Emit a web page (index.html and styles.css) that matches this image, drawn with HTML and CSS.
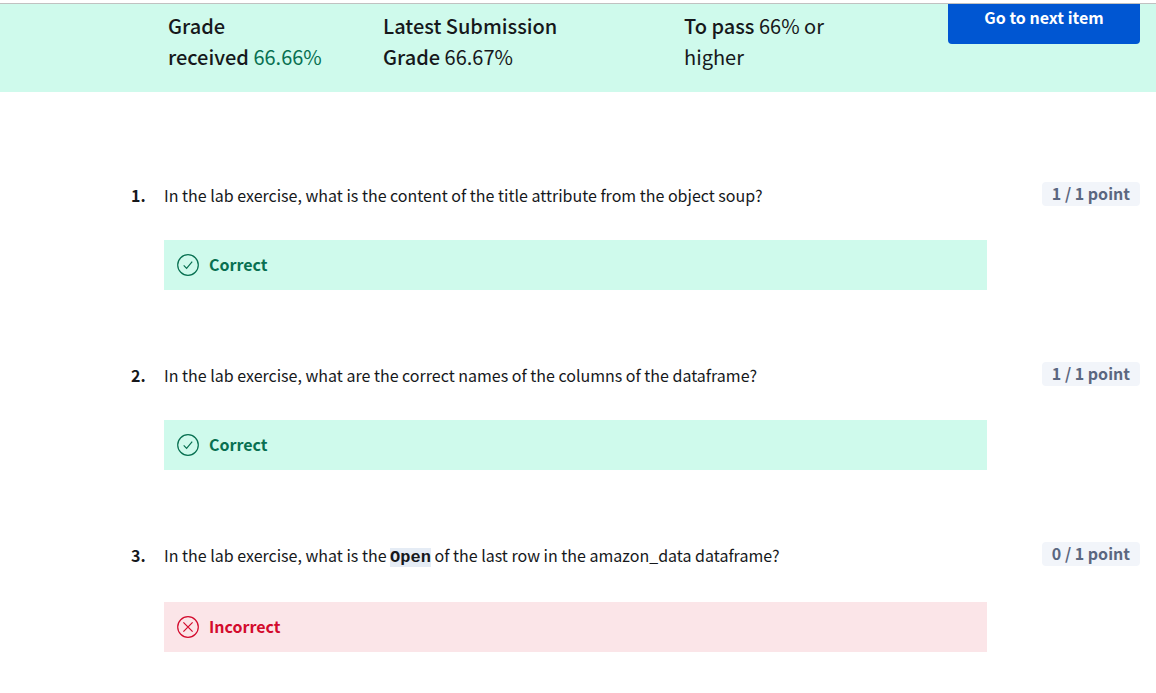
FILE: index.html
```html
<!DOCTYPE html>
<html lang="en">
<head>
<meta charset="utf-8">
<meta name="viewport" content="width=device-width, initial-scale=1">
<title>Quiz results</title>
<link rel="stylesheet" href="styles.css">
</head>
<body>
<header class="summary">
  <div class="stat stat-received"><strong>Grade received</strong>&nbsp;<span class="passed">66.66%</span></div>
  <div class="stat stat-latest"><strong>Latest Submission Grade</strong> <span>66.67%</span></div>
  <div class="stat stat-pass"><strong>To pass</strong> <span>66% or higher</span></div>
  <button class="next" type="button">Go to next item</button>
</header>
<main class="questions">
  <section class="question">
    <span class="number">1.</span>
    <p class="prompt">In the lab exercise, what is the content of the title attribute from the object soup?</p>
    <span class="points">1 / 1 point</span>
    <div class="feedback correct">
      <svg class="icon" viewBox="0 0 22 22" aria-hidden="true"><circle cx="11" cy="11" r="10.3"/><path d="M6.7 11.3l2.9 3 5.6-6.6"/></svg>
      <span class="verdict">Correct</span>
    </div>
  </section>
  <section class="question">
    <span class="number">2.</span>
    <p class="prompt">In the lab exercise, what are the correct names of the columns of the dataframe?</p>
    <span class="points">1 / 1 point</span>
    <div class="feedback correct">
      <svg class="icon" viewBox="0 0 22 22" aria-hidden="true"><circle cx="11" cy="11" r="10.3"/><path d="M6.7 11.3l2.9 3 5.6-6.6"/></svg>
      <span class="verdict">Correct</span>
    </div>
  </section>
  <section class="question">
    <span class="number">3.</span>
    <p class="prompt">In the lab exercise, what is the <code>Open</code> of the last row in the amazon_data dataframe?</p>
    <span class="points">0 / 1 point</span>
    <div class="feedback incorrect">
      <svg class="icon" viewBox="0 0 22 22" aria-hidden="true"><circle cx="11" cy="11" r="10.3"/><path d="M6.4 6.4l9.2 9.2M15.6 6.4l-9.2 9.2"/></svg>
      <span class="verdict">Incorrect</span>
    </div>
  </section>
</main>
</body>
</html>
```
FILE: styles.css
```css
* {
  box-sizing: border-box;
}

body {
  margin: 0;
  padding-top: 3px;
  color: #16181b;
  background: #fff;
  font-family: "Noto Sans CJK SC", "Noto Sans", sans-serif;
  font-size: 16px;
  line-height: 24px;
}

.summary {
  display: grid;
  grid-template-columns: 215px 301px 1fr 192px;
  align-items: start;
  padding: 0 16px 20px 168px;
  border-top: 1px solid #c1c1c1;
  background: #cffaec;
}

.stat {
  padding-top: 6px;
  font-size: 20px;
  line-height: 31px;
}

.stat-received,
.stat-pass {
  max-width: 160px;
}

.stat-latest {
  max-width: 200px;
}

.stat strong {
  font-weight: 500;
}

.passed {
  color: #087051;
}

.next {
  height: 40px;
  padding: 0 0 14px;
  border: 0;
  border-radius: 0 0 4px 4px;
  color: #fff;
  background: #0056d2;
  font: 700 16px/26px "Noto Sans CJK SC", "Noto Sans", sans-serif;
}

.questions {
  display: grid;
  gap: 72px;
  padding: 90px 16px 40px 131px;
}

.question {
  display: grid;
  grid-template-columns: 33px 1fr auto;
  align-items: start;
  row-gap: 32px;
}

.number,
.prompt {
  margin: 0;
  padding: 1px 0;
}

.number {
  font-weight: 700;
}

.points {
  padding: 0 10px 2px;
  border-radius: 4px;
  color: #5b6780;
  background: #f2f5fa;
  font-weight: 700;
  line-height: 22px;
}

.prompt code {
  background: #e5ecf5;
  font: 700 17px/22px "Liberation Mono", monospace;
}

.feedback {
  display: flex;
  grid-column: 2 / 4;
  gap: 10px;
  align-items: center;
  height: 50px;
  margin-right: 153px;
  padding: 0 13px;
  font-weight: 700;
}

.verdict {
  padding-bottom: 2px;
}

.correct {
  color: #087051;
  background: #cffaec;
}

.incorrect {
  color: #d30b2d;
  background: #fbe5e8;
}

.icon {
  width: 22px;
  height: 22px;
  fill: none;
  stroke: currentColor;
  stroke-width: 1.2;
}
```
